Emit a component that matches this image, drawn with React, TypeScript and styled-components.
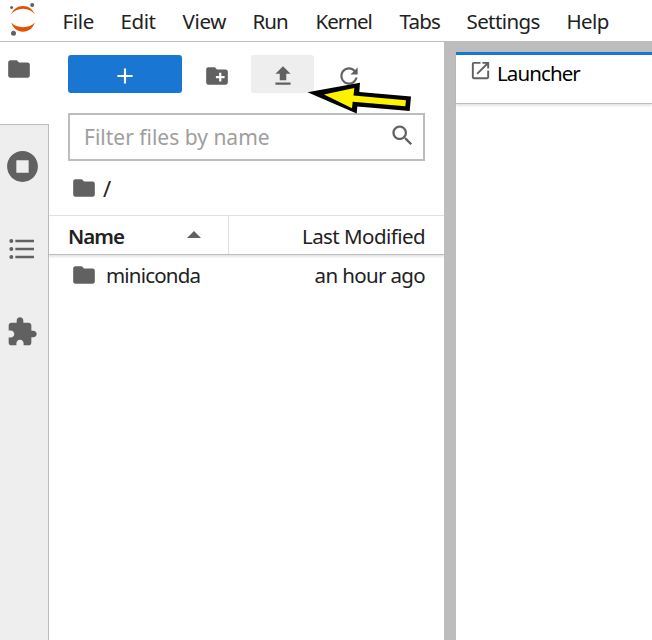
import React from 'react';
import styled, { createGlobalStyle } from 'styled-components';

const Global = createGlobalStyle`
  * { box-sizing: border-box; }
  body { margin: 0; background: #fff; overflow: hidden; }
`;

const Shell = styled.div`
  width: 652px;
  height: 640px;
  display: flex;
  flex-direction: column;
  overflow: hidden;
  background: #fff;
  color: #212121;
  font-family: 'Noto Sans', 'Open Sans', sans-serif;
  font-size: 20.5px;
  line-height: 28px;
  white-space: nowrap;
`;

const Label = styled.span<{ $spacing?: number }>`
  letter-spacing: ${(p) => p.$spacing ?? -0.5}px;
`;

const MenuBar = styled.header`
  display: flex;
  flex: 0 0 42px;
  border-bottom: 1px solid #bdbdbd;
`;

const LogoBox = styled.div`
  width: 62.5px;
  height: 41px;
`;

const MenuItem = styled.div<{ $width: number }>`
  width: ${(p) => p.$width}px;
  padding: 7px 0 0 0;
`;

const Workspace = styled.div`
  display: flex;
  flex: 1;
  min-height: 0;
`;

const ActivityBar = styled.nav`
  flex: 0 0 49px;
  display: flex;
  flex-direction: column;
  background: #eee;
`;

const ActivityTab = styled.div<{ $active?: boolean }>`
  height: 83px;
  display: flex;
  align-items: ${(p) => (p.$active ? 'flex-start' : 'center')};
  justify-content: center;
  padding: ${(p) => (p.$active ? '14px 11px 0 0' : '0 4px 1px 0')};
  background: ${(p) => (p.$active ? '#fff' : '#eee')};
  border-right: ${(p) => (p.$active ? '0' : '1px solid #bdbdbd')};
  border-bottom: ${(p) => (p.$active ? '1px solid #bdbdbd' : '0')};
`;

const ActivityRest = styled.div`
  flex: 1;
  border-right: 1px solid #bdbdbd;
`;

const Browser = styled.section`
  flex: 0 0 395px;
  display: flex;
  flex-direction: column;
`;

const Toolbar = styled.div`
  position: relative;
  display: flex;
  gap: 3px;
  height: 51px;
  margin: 13px 0 0 19px;
  padding: 0 0 13px;
`;

const ToolButton = styled.div<{ $variant?: 'primary' | 'hover' }>`
  width: ${(p) => (p.$variant === 'primary' ? 114 : 63)}px;
  height: 38px;
  display: flex;
  align-items: center;
  justify-content: center;
  padding-top: 3px;
  border-radius: 3px;
  background: ${(p) =>
    p.$variant === 'primary' ? '#1976d2' : p.$variant === 'hover' ? '#eee' : 'transparent'};
`;

const Pointer = styled.svg`
  position: absolute;
  left: 236px;
  top: 24px;
  z-index: 2;
`;

const FilterBox = styled.div`
  display: flex;
  justify-content: space-between;
  height: 48px;
  width: 357px;
  margin: 7px 0 0 19px;
  padding: 7px 7px 0 14px;
  border: 2px solid #bdbdbd;
  color: #9e9e9e;
  font-size: 21px;
  line-height: 30px;
`;

const Crumbs = styled.div`
  display: flex;
  align-items: center;
  gap: 6px;
  height: 54px;
  padding: 0 0 0 22px;
`;

const Slash = styled.span`
  font-size: 22px;
`;

const HeaderRow = styled.div`
  display: flex;
  height: 40px;
  border-top: 1px solid #e0e0e0;
  border-bottom: 1px solid #bdbdbd;
  box-shadow: 0 2px 2px rgba(0, 0, 0, 0.1);
`;

const NameHead = styled.div`
  width: 180px;
  display: flex;
  justify-content: space-between;
  padding: 6px 27px 0 19px;
  font-weight: 600;
  border-right: 1px solid #e0e0e0;
`;

const ModifiedHead = styled.div`
  flex: 1;
  padding: 6px 19px 0 0;
  text-align: right;
`;

const FileRow = styled.div`
  display: flex;
  align-items: center;
  height: 40px;
  padding: 0 19px 1px 22px;
`;

const FileName = styled.div`
  flex: 1;
  padding-left: 9px;
`;

const Splitter = styled.div`
  flex: 0 0 12px;
  background: #bdbdbd;
`;

const Dock = styled.main`
  flex: 1;
  padding-top: 10px;
  background: linear-gradient(#bdbdbd 10px, #fff 10px);
`;

const DockTab = styled.div`
  display: flex;
  gap: 5px;
  height: 52px;
  padding: 4px 0 0 13px;
  color: #000;
  border-top: 3px solid #1976d2;
  border-bottom: 1px solid #bdbdbd;
  box-shadow: 0 2px 2px rgba(0, 0, 0, 0.1);
`;

const Svg = styled.svg`
  display: block;
  flex: none;
`;

const SortArrow = styled(Svg)`
  margin-top: 9px;
`;

const paths = {
  folder: 'M10 4H4c-1.1 0-1.99.9-1.99 2L2 18c0 1.1.9 2 2 2h16c1.1 0 2-.9 2-2V8c0-1.1-.9-2-2-2h-8l-2-2z',
  add: 'M19 13h-6v6h-2v-6H5v-2h6V5h2v6h6v2z',
  newFolder:
    'M20 6h-8l-2-2H4c-1.11 0-1.99.89-1.99 2L2 18c0 1.11.89 2 2 2h16c1.11 0 2-.89 2-2V8c0-1.11-.89-2-2-2zm-1 8h-3v3h-2v-3h-3v-2h3V9h2v3h3v2z',
  upload: 'M5 20h14v-2H5v2zm0-10h4v6h6v-6h4l-7-7-7 7z',
  refresh:
    'M9 13.5c-2.49 0-4.5-2.01-4.5-4.5S6.51 4.5 9 4.5c1.24 0 2.36.52 3.17 1.33L10 8h5V3l-1.76 1.76C12.15 3.68 10.66 3 9 3 5.69 3 3.01 5.69 3.01 9S5.69 15 9 15c2.97 0 5.43-2.16 5.9-5h-1.52c-.46 2-2.24 3.5-4.38 3.5z',
  stop: 'M12 2C6.48 2 2 6.48 2 12s4.48 10 10 10 10-4.48 10-10S17.52 2 12 2zm4 14H8V8h8v8z',
  toc: 'M7 5h14v2H7V5m0 8v-2h14v2H7M4 4.5A1.5 1.5 0 1 1 4 7.5A1.5 1.5 0 1 1 4 4.5M4 10.5A1.5 1.5 0 1 1 4 13.5A1.5 1.5 0 1 1 4 10.5M7 19v-2h14v2H7M4 16.5A1.5 1.5 0 1 1 4 19.5A1.5 1.5 0 1 1 4 16.5',
  puzzle:
    'M20.5 11H19V7c0-1.1-.9-2-2-2h-4V3.5C13 2.12 11.88 1 10.5 1S8 2.12 8 3.5V5H4c-1.1 0-1.99.9-1.99 2v3.8H3.5c1.49 0 2.7 1.21 2.7 2.7s-1.21 2.7-2.7 2.7H2V20c0 1.1.9 2 2 2h3.8v-1.5c0-1.49 1.21-2.7 2.7-2.7 1.49 0 2.7 1.21 2.7 2.7V22H17c1.1 0 2-.9 2-2v-4h1.5c1.38 0 2.5-1.12 2.5-2.5S21.88 11 20.5 11z',
  search:
    'M15.5 14h-.79l-.28-.27C15.41 12.59 16 11.11 16 9.5 16 5.91 13.09 3 9.5 3S3 5.91 3 9.5 5.91 16 9.5 16c1.61 0 3.09-.59 4.23-1.57l.27.28v.79l5 4.99L20.49 19l-4.99-5zm-6 0C7.01 14 5 11.99 5 9.5S7.01 5 9.5 5 14 7.01 14 9.5 11.99 14 9.5 14z',
  launch:
    'M19 19H5V5h7V3H5c-1.11 0-2 .9-2 2v14c0 1.1.89 2 2 2h14c1.1 0 2-.9 2-2v-7h-2v7zM14 3v2h3.59l-9.83 9.83 1.41 1.41L19 6.41V10h2V3h-7z',
};

type IconProps = { name: keyof typeof paths; size?: number; color?: string };

const Icon = ({ name, size = 26, color = '#616161' }: IconProps) => (
  <Svg width={size} height={size} viewBox={name === 'refresh' ? '0 0 18 18' : '0 0 24 24'} fill={color}>
    <path d={paths[name]} />
  </Svg>
);

const Logo = () => (
  <Svg width="46" height="41" viewBox="0 0 46 41">
    <g fill="#e65100">
      <path d="M11.2 14.3C13 9.3 17.5 6 23 6s10 3.3 11.8 8.3C32.2 10.9 28 8.8 23 8.8s-9.2 2.1-11.8 5.5z" />
      <path d="M11.2 22.6C13.8 25.5 18 27.2 23 27.2s9.2-1.7 11.8-4.6C33 28.3 28.5 31.8 23 31.8s-10-3.5-11.8-9.2z" />
    </g>
    <g fill="#616161">
      <circle cx="11.6" cy="7.5" r="1.5" />
      <circle cx="32.2" cy="5.1" r="2" />
      <circle cx="13.5" cy="33.2" r="2.5" />
    </g>
  </Svg>
);

const menus = [
  { text: 'File', width: 58, spacing: -0.3 },
  { text: 'Edit', width: 62, spacing: -0.4 },
  { text: 'View', width: 70, spacing: -0.3 },
  { text: 'Run', width: 63, spacing: -1 },
  { text: 'Kernel', width: 84, spacing: -1 },
  { text: 'Tabs', width: 67, spacing: -0.8 },
  { text: 'Settings', width: 100, spacing: -0.6 },
  { text: 'Help', width: 60, spacing: -0.6 },
];

export default function App() {
  return (
    <Shell>
      <Global />
      <MenuBar>
        <LogoBox>
          <Logo />
        </LogoBox>
        {menus.map((m) => (
          <MenuItem key={m.text} $width={m.width}>
            <Label $spacing={m.spacing}>{m.text}</Label>
          </MenuItem>
        ))}
      </MenuBar>
      <Workspace>
        <ActivityBar>
          <ActivityTab $active>
            <Icon name="folder" />
          </ActivityTab>
          <ActivityTab>
            <Icon name="stop" size={37} />
          </ActivityTab>
          <ActivityTab>
            <Icon name="toc" size={32} />
          </ActivityTab>
          <ActivityTab>
            <Icon name="puzzle" size={32} />
          </ActivityTab>
          <ActivityRest />
        </ActivityBar>
        <Browser>
          <Toolbar>
            <ToolButton $variant="primary">
              <Icon name="add" color="#fff" />
            </ToolButton>
            <ToolButton>
              <Icon name="newFolder" />
            </ToolButton>
            <ToolButton $variant="hover">
              <Icon name="upload" />
            </ToolButton>
            <ToolButton>
              <Icon name="refresh" />
            </ToolButton>
            <Pointer width="112" height="40" viewBox="304 79 112 40">
              <path
                fill="#000"
                d="M307.5 92.3L360 82.8L359.3 92L411 96.5L409.7 111L357.3 106.5L356.7 113.5Z"
              />
              <path
                fill="#fff200"
                d="M324 94.6L354.3 88L353.5 95.5L406 100.2L405.3 106.3L352.7 101.7L352 108.3Z"
              />
            </Pointer>
          </Toolbar>
          <FilterBox>
            <Label $spacing={0}>Filter files by name</Label>
            <Icon name="search" size={27} />
          </FilterBox>
          <Crumbs>
            <Icon name="folder" />
            <Slash>/</Slash>
          </Crumbs>
          <HeaderRow>
            <NameHead>
              <Label $spacing={-1}>Name</Label>
              <SortArrow width="14" height="7" viewBox="0 0 14 7">
                <path d="M0 7L7 0L14 7Z" fill="#616161" />
              </SortArrow>
            </NameHead>
            <ModifiedHead>
              <Label $spacing={-0.55}>Last Modified</Label>
            </ModifiedHead>
          </HeaderRow>
          <FileRow>
            <Icon name="folder" />
            <FileName>
              <Label $spacing={-0.8}>miniconda</Label>
            </FileName>
            <Label $spacing={-0.65}>an hour ago</Label>
          </FileRow>
        </Browser>
        <Splitter />
        <Dock>
          <DockTab>
            <Icon name="launch" size={23} />
            <Label $spacing={-0.9}>Launcher</Label>
          </DockTab>
        </Dock>
      </Workspace>
    </Shell>
  );
}
